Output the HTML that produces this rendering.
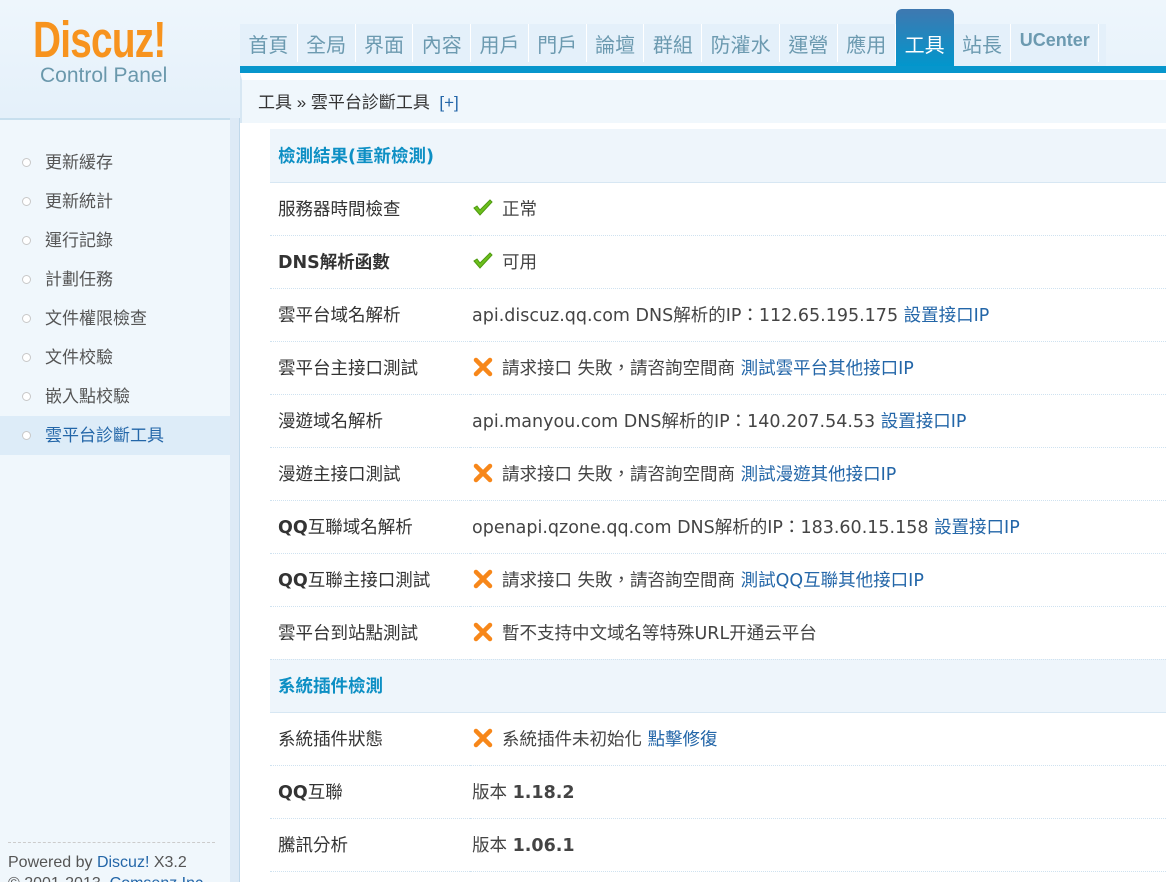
<!DOCTYPE html>
<html><head><meta charset="utf-8"><style>
*{margin:0;padding:0;box-sizing:border-box}
html,body{width:1166px;height:882px;overflow:hidden}
body{background:#fff;font-family:"Liberation Sans","Noto Sans CJK TC",sans-serif;color:#333;position:relative}
.hdr{position:absolute;left:0;top:0;width:1166px;height:118px;background:linear-gradient(#eef6fc,#e4f0fa)}
.logo{position:absolute;left:33px;top:10px;font-size:51px;font-weight:bold;color:#f7931e;letter-spacing:-1px;transform:scaleX(0.76);transform-origin:left}
.cp{position:absolute;left:40px;top:64px;font-size:21px;color:#6a98ac}
.nav{position:absolute;left:240px;top:24px;height:42px;width:866px;background:#e4f0fa;display:flex}
.nav span{font-size:20px;color:#6c9ab0;padding:5px 8.4px 0;height:38px;border-right:1px solid #fff;white-space:nowrap}
.nav span.act{background:linear-gradient(#3f78b0,#0296cc);color:#fff;margin-top:-15px;height:57px;padding-top:20px;border-radius:6px 6px 0 0;border:none;padding-left:9px;padding-right:9px}
.nav span.uc{font-weight:bold;font-size:18px;padding-top:6px}
.bar{position:absolute;left:240px;top:66px;width:926px;height:7px;background:#0796cc}
.crumb{position:absolute;left:240px;top:73px;width:926px;height:50px;background:#f0f7fc;border-top:7px solid #fff;border-left:2px solid #d7e7f3;font-size:17px;padding:8px 16px;color:#333}
.crumb b{font-weight:normal;color:#2366a8}
.side{position:absolute;left:0;top:118px;width:230px;height:764px;background:#f0f7fc;border-top:2px solid #c7dfee}
.sbord{position:absolute;left:230px;top:118px;width:10px;height:764px;background:#ddeaf6;border-right:1px solid #c0d8ea}
.side ul{list-style:none;margin-top:23px}
.side li{height:39px;line-height:39px;font-size:17px;color:#555;padding-left:45px;position:relative}
.side li:before{content:"";position:absolute;left:22px;top:15px;width:7px;height:7px;border:1px solid #c8c8c8;border-radius:50%;background:#fff}
.side li.on{background:#ddecf8;color:#2366a8}
.foot{position:absolute;left:8px;top:722px;width:207px;border-top:1px dashed #ccc;padding-top:9px;font-size:16px;color:#555;line-height:21px}
.foot a{color:#2366a8}
table{position:absolute;left:270px;top:129px;width:896px;border-collapse:collapse;font-family:"DejaVu Sans","Noto Sans CJK TC",sans-serif}
td{height:53px;font-size:17.5px;border-bottom:1px dotted #cfe2f0;vertical-align:middle;white-space:nowrap}
td.l{width:200px;padding-left:8px;color:#333}
td.v{padding-left:2px;color:#444}
tr.h td{background:#eef5fb;color:#0d8fc4;font-weight:bold;border-bottom:1px solid #d7e7f3;padding-left:8px}
a{color:#2366a8;text-decoration:none}
.ok,.x{display:inline-block;width:22px;height:20px;vertical-align:-3px;margin-right:8px}
</style></head><body>
<div class="hdr"></div>
<div class="logo">Discuz!</div>
<div class="cp">Control Panel</div>
<div class="nav"><span>首頁</span><span>全局</span><span>界面</span><span>內容</span><span>用戶</span><span>門戶</span><span>論壇</span><span>群組</span><span>防灌水</span><span>運營</span><span>應用</span><span class="act">工具</span><span>站長</span><span class="uc">UCenter</span></div>
<div class="bar"></div>
<div class="crumb">工具 » 雲平台診斷工具 &nbsp;<b>[+]</b></div>
<div class="side"><ul>
<li>更新緩存</li><li>更新統計</li><li>運行記錄</li><li>計劃任務</li><li>文件權限檢查</li><li>文件校驗</li><li>嵌入點校驗</li><li class="on">雲平台診斷工具</li></ul>
<div class="foot">Powered by <a>Discuz!</a> X3.2<br>© 2001-2013, <a>Comsenz Inc.</a></div></div>
<div class="sbord"></div>
<svg width="0" height="0" style="position:absolute"><defs>
<symbol id="ok" viewBox="0 0 22 20"><path d="M2 10l6 7L20 4l-2-2L8 12 5 8z" fill="#6cbf1c" stroke="#4e9a10" stroke-width="1"/></symbol>
<symbol id="x" viewBox="0 0 22 20"><path d="M4 3l14 14M18 3L4 17" stroke="#f7871a" stroke-width="4.5" stroke-linecap="round"/></symbol></defs></svg>
<table>
<tr class="h"><td colspan="2">檢測結果(重新檢測)</td></tr>
<tr><td class="l">服務器時間檢查</td><td class="v"><svg class="ok"><use href="#ok"/></svg>正常</td></tr>
<tr><td class="l"><b>DNS解析函數</b></td><td class="v"><svg class="ok"><use href="#ok"/></svg>可用</td></tr>
<tr><td class="l">雲平台域名解析</td><td class="v">api.discuz.qq.com DNS解析的IP：112.65.195.175 <a>設置接口IP</a></td></tr>
<tr><td class="l">雲平台主接口測試</td><td class="v"><svg class="x"><use href="#x"/></svg>請求接口 失敗，請咨詢空間商 <a>測試雲平台其他接口IP</a></td></tr>
<tr><td class="l">漫遊域名解析</td><td class="v">api.manyou.com DNS解析的IP：140.207.54.53 <a>設置接口IP</a></td></tr>
<tr><td class="l">漫遊主接口測試</td><td class="v"><svg class="x"><use href="#x"/></svg>請求接口 失敗，請咨詢空間商 <a>測試漫遊其他接口IP</a></td></tr>
<tr><td class="l"><b>QQ</b>互聯域名解析</td><td class="v">openapi.qzone.qq.com DNS解析的IP：183.60.15.158 <a>設置接口IP</a></td></tr>
<tr><td class="l"><b>QQ</b>互聯主接口測試</td><td class="v"><svg class="x"><use href="#x"/></svg>請求接口 失敗，請咨詢空間商 <a>測試QQ互聯其他接口IP</a></td></tr>
<tr><td class="l">雲平台到站點測試</td><td class="v"><svg class="x"><use href="#x"/></svg>暫不支持中文域名等特殊URL开通云平台</td></tr>
<tr class="h"><td colspan="2">系統插件檢測</td></tr>
<tr><td class="l">系統插件狀態</td><td class="v"><svg class="x"><use href="#x"/></svg>系統插件未初始化 <a>點擊修復</a></td></tr>
<tr><td class="l"><b>QQ</b>互聯</td><td class="v">版本 <b>1.18.2</b></td></tr>
<tr><td class="l">騰訊分析</td><td class="v">版本 <b>1.06.1</b></td></tr>
</table>
</body></html>
